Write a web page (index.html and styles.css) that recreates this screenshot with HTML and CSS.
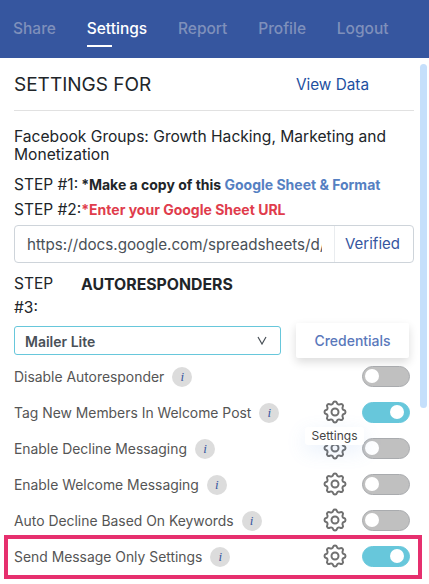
FILE: index.html
```html
<!DOCTYPE html>
<html lang="en">

<head>
    <meta charset="UTF-8">
    <title>Settings</title>
    <link rel="stylesheet" href="styles.css">
</head>

<body>
    <svg class="icon-defs" width="0" height="0">
        <symbol id="gear" viewBox="0 0 24 24">
            <path d="M10.325 4.317c.426-1.756 2.924-1.756 3.35 0a1.724 1.724 0 002.573 1.066c1.543-.94 3.31.826 2.37 2.37a1.724 1.724 0 001.065 2.572c1.756.426 1.756 2.924 0 3.35a1.724 1.724 0 00-1.066 2.573c.94 1.543-.826 3.31-2.37 2.37a1.724 1.724 0 00-2.572 1.065c-.426 1.756-2.924 1.756-3.35 0a1.724 1.724 0 00-2.573-1.066c-1.543.94-3.31-.826-2.37-2.37a1.724 1.724 0 00-1.065-2.572c-1.756-.426-1.756-2.924 0-3.35a1.724 1.724 0 001.066-2.573c-.94-1.543.826-3.31 2.37-2.37.996.608 2.296.07 2.572-1.065z" />
            <circle cx="12" cy="12" r="3" />
        </symbol>
    </svg>

    <nav class="topnav">
        <a class="nav-link">Share</a>
        <a class="nav-link active">Settings</a>
        <a class="nav-link">Report</a>
        <a class="nav-link">Profile</a>
        <a class="nav-link">Logout</a>
    </nav>

    <main class="panel">
        <div class="scroll-thumb"></div>

        <header class="panel-head">
            <h1>SETTINGS FOR</h1>
            <a class="view-data">View Data</a>
        </header>

        <p class="group-name">Facebook Groups: Growth Hacking, Marketing and Monetization</p>

        <p class="step">STEP #1:<b class="copy-note">*Make a copy of this <span class="sheet-link">Google Sheet &amp; Format</span></b></p>
        <p class="step step-two">STEP #2:<b class="warn">*Enter your Google Sheet URL</b></p>

        <div class="url-box">
            <div class="url-field">
                <span class="url-text">https://docs.google.com/spreadsheets/d/</span>
            </div>
            <span class="url-status">Verified</span>
        </div>

        <div class="step-three">
            <span class="step-label">STEP #3:</span>
            <b class="step-title">AUTORESPONDERS</b>
        </div>

        <div class="picker-row">
            <div class="picker">
                <span class="picker-value">Mailer Lite</span>
                <svg class="caret" width="10" height="9" viewBox="0 0 10 9">
                    <path d="M1 1l4 7 4-7" />
                </svg>
            </div>
            <a class="credentials">Credentials</a>
        </div>

        <div class="opt first">
            <span class="opt-name">Disable Autoresponder</span>
            <i class="info">i</i>
            <span class="switch"></span>
        </div>
        <div class="opt">
            <span class="opt-name">Tag New Members In Welcome Post</span>
            <i class="info">i</i>
            <svg class="gear"><use href="#gear" /></svg>
            <span class="switch on"></span>
        </div>
        <div class="opt">
            <span class="opt-name">Enable Decline Messaging</span>
            <i class="info">i</i>
            <svg class="gear"><use href="#gear" /></svg>
            <span class="switch"></span>
            <span class="tooltip">Settings</span>
        </div>
        <div class="opt">
            <span class="opt-name">Enable Welcome Messaging</span>
            <i class="info">i</i>
            <svg class="gear"><use href="#gear" /></svg>
            <span class="switch"></span>
        </div>
        <div class="opt">
            <span class="opt-name">Auto Decline Based On Keywords</span>
            <i class="info">i</i>
            <svg class="gear"><use href="#gear" /></svg>
            <span class="switch"></span>
        </div>
        <div class="opt marked">
            <span class="opt-name">Send Message Only Settings</span>
            <i class="info">i</i>
            <svg class="gear"><use href="#gear" /></svg>
            <span class="switch on"></span>
        </div>
    </main>
</body>

</html>
```

FILE: styles.css
```css
html,
body {
    margin: 0;
    padding: 0;
    height: 584px;
    overflow: hidden;
}

body {
    font-family: 'Inter', 'Liberation Sans', sans-serif;
    font-size: 15.5px;
    color: #212529;
    background-color: #fff;
}

.icon-defs {
    position: absolute;
}

.topnav {
    display: flex;
    gap: 30.8px;
    height: 58px;
    padding: 0 13px;
    box-sizing: border-box;
    background-color: #36569f;
    font-size: 15.5px;
    font-weight: 500;
    line-height: 58px;
}

.nav-link {
    position: relative;
    color: #7f90bb;
}

.nav-link.active {
    color: #fff;
}

.nav-link.active::after {
    content: "";
    position: absolute;
    left: 0;
    bottom: 11px;
    width: 25px;
    height: 2px;
    background-color: #fff;
}

.panel {
    position: relative;
    padding: 0 15px 0 14px;
}

.scroll-thumb {
    position: absolute;
    top: 6px;
    right: 2px;
    width: 7px;
    height: 344px;
    border-radius: 4px;
    background-color: #c5dffb;
}

.panel-head {
    display: flex;
    align-items: center;
    justify-content: space-between;
    height: 52px;
    padding-right: 45px;
    border-bottom: 1px solid #e1e1e1;
}

.panel-head h1 {
    margin: 0;
    font-size: 19px;
    font-weight: 400;
    color: #212529;
}

.view-data {
    font-size: 15.3px;
    color: #1d4f9f;
}

.group-name {
    margin: 17px 0 8px;
    font-size: 15.6px;
    line-height: 18px;
}

.step {
    margin: 0;
    height: 25px;
    line-height: 25px;
    white-space: nowrap;
}

.step b {
    font-size: 14px;
    font-weight: 700;
}

.step-two {
    height: 26px;
}

.copy-note {
    margin-left: 3px;
}

.sheet-link {
    color: #5580c2;
}

.warn {
    color: #e03c4c;
}

.url-box {
    display: flex;
    align-items: center;
    height: 38px;
    border: 1px solid #ced4da;
    border-radius: 4px;
    box-sizing: border-box;
    margin-top: 2px;
}

.url-field {
    flex: 1;
    min-width: 0;
    padding: 0 12px;
}

.url-text {
    display: block;
    overflow: hidden;
    white-space: nowrap;
    font-size: 15.2px;
    color: #495057;
}

.url-status {
    width: 79px;
    flex: none;
    line-height: 36px;
    padding-left: 10px;
    box-sizing: border-box;
    border-left: 1px solid #e9ecef;
    font-size: 15px;
    color: #36569f;
}

.step-three {
    display: flex;
    gap: 13px;
    margin-top: 9px;
    line-height: 24px;
}

.step-label {
    width: 54px;
}

.step-title {
    padding-top: 1px;
    font-size: 15.8px;
    font-weight: 700;
}

.picker-row {
    display: flex;
    align-items: center;
    margin-top: 3px;
    gap: 15px;
}

.picker {
    display: flex;
    align-items: center;
    justify-content: space-between;
    width: 267px;
    height: 29px;
    padding: 0 13px 0 10px;
    box-sizing: border-box;
    border: 1px solid #67c7db;
    border-radius: 3px;
    font-size: 14px;
    font-weight: 600;
    color: #495057;
}

.picker-value {
    padding-top: 2px;
}

.caret path {
    fill: none;
    stroke: #495057;
    stroke-width: 1.2;
}

.credentials {
    width: 113px;
    height: 35px;
    line-height: 35px;
    text-align: center;
    font-size: 14px;
    font-weight: 500;
    color: #5a78bb;
    border-radius: 2px;
    box-shadow: 0 4px 10px rgba(0, 0, 0, 0.14);
}

.opt {
    position: relative;
    display: flex;
    align-items: center;
    height: 36px;
    padding-right: 4px;
    font-size: 13.9px;
    color: #555;
}

.opt-name {
    padding-top: 2px;
    white-space: nowrap;
}

.info {
    width: 20px;
    height: 20px;
    margin-left: 8px;
    margin-top: 1px;
    border-radius: 50%;
    background-color: #dcdcdc;
    color: #36569f;
    font-family: 'Liberation Serif', serif;
    font-size: 13px;
    line-height: 20px;
    text-align: center;
}

.gear {
    width: 28px;
    height: 28px;
    margin-left: auto;
    fill: none;
    stroke: #707070;
    stroke-width: 1.7;
}

.switch {
    position: relative;
    width: 48px;
    height: 21px;
    margin-left: 13px;
    box-sizing: border-box;
    border: 1px solid #a9abae;
    border-radius: 11px;
    background-color: #c0c0c0;
}

.opt.first .switch {
    margin-left: auto;
}

.switch::after {
    content: "";
    position: absolute;
    top: 2.5px;
    left: 2px;
    width: 14px;
    height: 14px;
    border-radius: 50%;
    background-color: #fff;
}

.switch.on {
    border-color: #67c7db;
    background-color: #67c7db;
}

.switch.on::after {
    left: auto;
    right: 5px;
}

.tooltip {
    position: absolute;
    top: -3px;
    left: 291px;
    width: 59px;
    height: 18px;
    line-height: 17px;
    text-align: center;
    font-size: 12px;
    color: #444;
    background-color: #fff;
    border-radius: 3px;
    box-shadow: 0 6px 20px rgba(90, 150, 230, 0.14);
}

.marked::after {
    content: "";
    position: absolute;
    inset: -3px -8px -5px -10px;
    border: 4px solid #e62f6e;
    pointer-events: none;
}
```
